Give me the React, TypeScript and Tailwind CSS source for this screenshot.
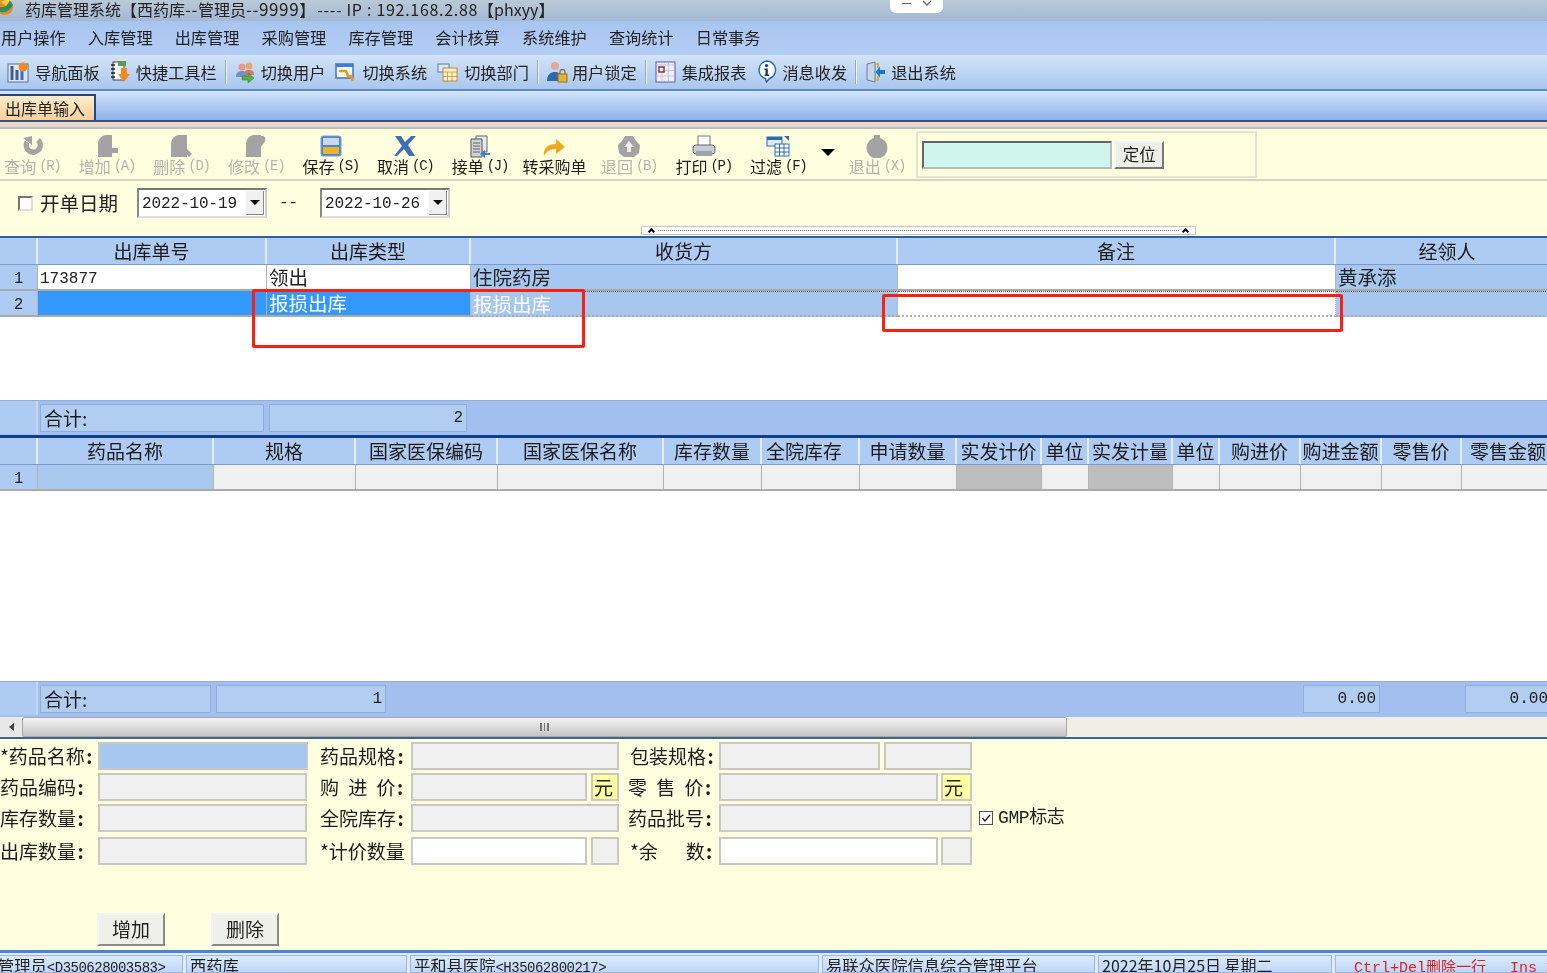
import type { ReactNode } from "react"

const cjk = "font-['Noto_Sans_CJK_SC','Liberation_Sans',sans-serif]"
const mono = "font-['Liberation_Mono','Noto_Sans_CJK_SC',monospace]"

const menus = ["用户操作", "入库管理", "出库管理", "采购管理", "库存管理", "会计核算", "系统维护", "查询统计", "日常事务"]

function NavIcon({ kind }: { kind: string }) {
  if (kind === "nav")
    return (
      <svg width="22" height="22" viewBox="0 0 22 22">
        <rect x="1" y="3" width="20" height="18" fill="#dfe7f5" stroke="#56709c" />
        <path d="M5 5v14M10 9v10" stroke="#3c5f9a" strokeWidth="3" />
        <path d="M15 19V10" stroke="#2f6fc0" strokeWidth="3" />
        <circle cx="16" cy="6" r="4.5" fill="#f08a24" />
      </svg>
    )
  if (kind === "quick")
    return (
      <svg width="21" height="23" viewBox="0 0 21 23">
        <rect x="3" y="2" width="11" height="18" fill="#f6f8fb" stroke="#39485a" />
        <path d="M1 5h4M1 9h4M1 13h4M1 17h4" stroke="#222" strokeWidth="1.600" />
        <rect x="8" y="1" width="8" height="5" fill="#5d9a55" />
        <path d="M11 8v6H8l6 8 6-8h-3V8z" fill="#ef8a1f" />
      </svg>
    )
  if (kind === "user")
    return (
      <svg width="21" height="22" viewBox="0 0 21 22">
        <circle cx="7" cy="6" r="3.5" fill="#e59a8a" />
        <path d="M1 16c0-5 3-6 6-6s5 1 5 6z" fill="#6d93cc" />
        <circle cx="14" cy="5" r="3.5" fill="#e7a46e" />
        <path d="M9 14c0-4 2-5 5-5s5 1 5 5z" fill="#d3786e" />
        <path d="M7 15h6v-3l6 5-6 5v-3H7z" fill="#56b04a" stroke="#2f7f2c" strokeWidth=".6" />
      </svg>
    )
  if (kind === "system")
    return (
      <svg width="21" height="22" viewBox="0 0 21 22">
        <rect x="1" y="3" width="17" height="14" fill="#f3f7fd" stroke="#3f74b8" strokeWidth="1.5" />
        <rect x="1" y="3" width="17" height="3" fill="#3f7fd0" />
        <path d="M4 10h7l2 5h3l2 5" fill="none" stroke="#e79a1e" strokeWidth="2.600" />
      </svg>
    )
  if (kind === "dept")
    return (
      <svg width="21" height="22" viewBox="0 0 21 22">
        <rect x="1" y="3" width="11" height="8" fill="#dbe8f8" stroke="#4c7fbc" />
        <rect x="6" y="7" width="14" height="13" fill="#fbf1c8" stroke="#c08a30" />
        <path d="M6 11h14M10.500 11v9M15 11v9M6 15.500h14" stroke="#c08a30" strokeWidth=".7" />
      </svg>
    )
  if (kind === "lock")
    return (
      <svg width="21" height="22" viewBox="0 0 21 22">
        <circle cx="8" cy="5" r="4" fill="#e3a79a" />
        <path d="M0 20c0-7 4-9 8-9s7 2 7 9z" fill="#2f68ae" />
        <rect x="11" y="13" width="9" height="8" fill="#e3b23c" stroke="#9a7414" />
        <path d="M13 13v-2a2.500 2.500 0 0 1 5 0v2" fill="none" stroke="#8a7a50" strokeWidth="1.300" />
      </svg>
    )
  if (kind === "report")
    return (
      <svg width="21" height="22" viewBox="0 0 21 22">
        <rect x="1" y="1" width="19" height="20" fill="#f2eefa" stroke="#4d5fa5" />
        <path d="M1 4h19M7 1v20M13.500 1v20M1 9.500h19M1 15h19" stroke="#b7b4da" strokeWidth=".7" />
        <rect x="4" y="6" width="5" height="5" fill="#fff" stroke="#9c1a30" strokeWidth="1.400" />
      </svg>
    )
  if (kind === "msg")
    return (
      <svg width="21" height="23" viewBox="0 0 21 23">
        <path d="M10.500 1a9 9 0 0 1 3 17.500L10.500 22l-1-3.500A9 9 0 0 1 10.500 1z" fill="#fff" stroke="#2c69b4" strokeWidth="1.500" />
        <circle cx="10.500" cy="5.500" r="1.600" fill="#12386e" />
        <path d="M8.500 8.500h3.300v6h1.200v1.500H8.500v-1.500h1v-4.500h-1z" fill="#12386e" />
      </svg>
    )
  return (
    <svg width="21" height="22" viewBox="0 0 21 22">
      <path d="M2 3l8-2v20l-8-2z" fill="#c8d4e8" stroke="#6a7c9c" />
      <path d="M10 3h3v4M13 15v4h-3" fill="none" stroke="#d7a437" strokeWidth="1.600" />
      <path d="M20 9h-5V5.500L10.500 11l4.500 5.500V13h5z" fill="#1f78d0" />
    </svg>
  )
}

function NavItem({ kind, label, iconW, gap }: { kind: string; label: string; iconW: string; gap: string }) {
  return (
    <div className="flex items-center">
      <div className={`flex justify-center ${iconW} ${gap}`}>
        <NavIcon kind={kind} />
      </div>
      <span className="whitespace-nowrap">{label}</span>
    </div>
  )
}

function NavSep() {
  return <div className="mx-[8px] h-[24px] w-[2px] border-l border-r border-l-[#8fa8cc] border-r-[#eef4fc]" />
}

function ActionIcon({ kind }: { kind: string }) {
  const g = "#a3a3a3"
  switch (kind) {
    case "query":
      return (
        <svg width="24" height="22" viewBox="0 0 24 22">
          <path d="M7 7a7 7 0 1 0 11-2" fill="none" stroke={g} strokeWidth="5.500" />
          <path d="M3 3l9-2v9z" fill={g} />
        </svg>
      )
    case "add":
      return (
        <svg width="24" height="23" viewBox="0 0 24 23">
          <path d="M3 9c0-5 4-9 8-9h6v22H3z" fill={g} />
          <path d="M16 13h7v5h-7z" fill={g} />
        </svg>
      )
    case "del":
      return (
        <svg width="24" height="23" viewBox="0 0 24 23">
          <path d="M2 9c0-5 4-9 8-9h8v22H2z" fill={g} />
          <path d="M16 12l7 7-3 3-6-6z" fill={g} />
        </svg>
      )
    case "edit":
      return (
        <svg width="24" height="23" viewBox="0 0 24 23">
          <path d="M2 9c0-5 4-9 8-9h7v22H2z" fill={g} />
          <path d="M15 1h4c3 1 3 4 1 7l-4 5z" fill={g} />
        </svg>
      )
    case "save":
      return (
        <svg width="22" height="22" viewBox="0 0 22 22">
          <rect x="1" y="1" width="20" height="20" rx="2" fill="#4d84cf" stroke="#7d9fd0" />
          <rect x="3" y="3" width="16" height="7" fill="#c7d8f0" />
          <rect x="3" y="12" width="16" height="7" fill="#e9b32c" />
        </svg>
      )
    case "cancel":
      return (
        <svg width="24" height="22" viewBox="0 0 24 22">
          <path d="M2 1h6l4 6 6-6h5l-8 9 7 11h-6l-5-7-7 7H1l8-10z" fill="#3d6fb5" />
        </svg>
      )
    case "take":
      return (
        <svg width="24" height="23" viewBox="0 0 24 23">
          <path d="M8 1h11v16H8z" fill="#e8eaec" stroke="#666" />
          <path d="M3 4h11v18H3z" fill="#d0d3d6" stroke="#555" />
          <path d="M5 8h7M5 11h7M5 14h7M5 17h7" stroke="#666" />
          <path d="M22 18h-5v-3l-5 4 5 4v-3h5z" fill="#3e82c8" />
        </svg>
      )
    case "transfer":
      return (
        <svg width="24" height="22" viewBox="0 0 24 22">
          <path d="M2 21c-1-8 4-12 12-12V4l9 8-9 7v-5c-6 0-9 2-12 7z" fill="#f2a81e" />
        </svg>
      )
    case "back":
      return (
        <svg width="24" height="23" viewBox="0 0 24 23">
          <path d="M8 1h8l3 5 4 4-1 8-5 4H7l-5-4-1-8 4-4z" fill={g} />
          <path d="M12 6l5 6h-3v5h-4v-5H7z" fill="#efefe4" />
        </svg>
      )
    case "print":
      return (
        <svg width="24" height="22" viewBox="0 0 24 22">
          <rect x="6" y="1" width="12" height="10" fill="#fff" stroke="#777" />
          <rect x="1" y="10" width="22" height="9" rx="3" fill="#c9cdd3" stroke="#667" />
          <rect x="4" y="16" width="16" height="5" fill="#9ea4ad" />
        </svg>
      )
    case "filter":
      return (
        <svg width="24" height="22" viewBox="0 0 24 22">
          <rect x="1" y="2" width="15" height="9" fill="#dfeafa" stroke="#2e6ab8" />
          <rect x="1" y="2" width="15" height="3" fill="#2e6ab8" />
          <rect x="9" y="9" width="14" height="12" fill="#fff" stroke="#2e6ab8" />
          <path d="M9 13h14M9 17h14M13.500 9v12M18 9v12" stroke="#2e6ab8" />
          <path d="M18 1h5v5z" fill="#2e6ab8" />
        </svg>
      )
    default:
      return (
        <svg width="24" height="23" viewBox="0 0 24 23">
          <circle cx="12" cy="13" r="10.500" fill={g} />
          <rect x="9" y="0" width="6" height="4" fill={g} />
        </svg>
      )
  }
}

function Action({ kind, label, hot, off }: { kind: string; label: string; hot?: string; off?: boolean }) {
  return (
    <div className={`flex w-[74.6px] flex-col items-center ${off ? "text-[#b4b4b0]" : "text-[#1c1c1c]"}`}>
      <div className="flex h-[24px] items-center">
        <ActionIcon kind={kind} />
      </div>
      <div className="-mt-[3px] flex h-[22px] items-center whitespace-nowrap text-[16px] leading-[22px]">
        {label}
        {hot && <span className={`${mono} ml-[3px] text-[14px] tracking-[-1.300px]`}>({hot})</span>}
      </div>
    </div>
  )
}

function DateBox({ value }: { value: string }) {
  return (
    <div className="flex h-[30px] w-[130px] items-center border-2 border-t-[#777] border-l-[#888] border-r-[#ccc] border-b-[#ddd] bg-white">
      <span className={`${mono} ml-[3px] w-[104px] pt-[2px] text-[16px] tracking-[-0.1px]`}>{value}</span>
      <div className="flex h-[24px] w-[18px] items-center justify-center border-r border-b border-r-[#888] border-b-[#888] bg-[#f0f0f0]">
        <div className="h-0 w-0 border-x-[5px] border-t-[5px] border-x-transparent border-t-black" />
      </div>
    </div>
  )
}

const topCols = "grid-cols-[38px_229px_204px_427px_438px_224px]"
const lowCols = "grid-cols-[38px_176px_142px_142px_166px_98px_98px_97px_85px_47px_84px_47px_81px_81px_80px_94px]"

const lowHead = ["", "药品名称", "规格", "国家医保编码", "国家医保名称", "库存数量", "全院库存", "申请数量", "实发计价", "单位", "实发计量", "单位", "购进价", "购进金额", "零售价", "零售金额"]

function HeadCell({ className, children }: { className?: string; children?: ReactNode }) {
  return (
    <div className={`flex min-w-0 items-center justify-center whitespace-nowrap border-r-2 border-r-[#e3edfb] bg-[#aecbf3] text-[19px] leading-[24px] text-[#1a1a1a] ${className ?? ""}`}>
      {children}
    </div>
  )
}

function Cell({ className, children }: { className: string; children?: ReactNode }) {
  return <div className={`flex min-h-0 items-center whitespace-nowrap border-r border-b-2 border-r-[#b4b4b4] border-b-[#aaa] pl-[2px] ${className}`}>{children}</div>
}

function IndexCell({ n }: { n: number }) {
  return <Cell className={`${mono} justify-center bg-[#aecbf3] !pl-0 pt-[4px] text-[16px] leading-[20px]`}>{n}</Cell>
}

function SumBox({ className, children }: { className: string; children?: ReactNode }) {
  return <div className={`flex h-[28px] shrink-0 items-center border border-[#8fadde] bg-[#b1cdf1] px-[3px] leading-[24px] text-[#1c1c1c] ${className}`}>{children}</div>
}

// a trailing colon in the labels is half an em wide, as in the bitmap font of the picture
function Label({ className, text, colon = true }: { className: string; text: string; colon?: boolean }) {
  return (
    <div className={`shrink-0 whitespace-pre text-[19px] leading-[24px] text-[#1c1c1c] [word-spacing:5px] ${className}`}>
      {text}
      {colon && <span className="inline-block w-[9px] text-center font-bold">:</span>}
    </div>
  )
}

function Field({ className, children }: { className: string; children?: ReactNode }) {
  return <div className={`flex h-[28px] shrink-0 items-center border-2 border-[#c9c9c4] pl-[1px] text-[19px] leading-[24px] ${className}`}>{children}</div>
}

function FormBtn({ label, className }: { label: string; className: string }) {
  return (
    <div className={`flex h-[33px] w-[68px] items-center justify-center border-2 border-t-[#f4f4f4] border-l-[#f4f4f4] border-r-[#8a8a8a] border-b-[#8a8a8a] bg-[#f0f0ea] text-[19px] ${className}`}>
      {label}
    </div>
  )
}

function StatusCell({ className, children }: { className: string; children: ReactNode }) {
  return <div className={`h-full shrink-0 overflow-hidden whitespace-nowrap border border-[#9db8de] bg-gradient-to-b from-[#dcebfd] to-[#bfd6f6] leading-[19px] text-[#222] ${className}`}>{children}</div>
}

export default function App() {
  return (
    <div className={`${cjk} relative flex h-[973px] w-[1547px] flex-col overflow-hidden bg-white text-[#222] blur-[0.45px]`}>
      {/* title bar */}
      <div className="flex h-[21px] shrink-0 items-start bg-gradient-to-b from-[#b9c9d6] to-[#a3b9d3] text-[16px] leading-[17px]">
        <svg width="18" height="18" viewBox="0 0 18 18" className="-ml-[2px] mr-[9px]">
          <circle cx="7" cy="7" r="8" fill="#e98c1f" />
          <path d="M0 7c4 1 9 0 12-6l3 4c-3 6-9 9-14 6z" fill="#2f8f5c" />
          <path d="M3 2c3-2 6-3 9-2L8 6z" fill="#f4d03f" />
        </svg>
        <span className="whitespace-nowrap">
          药库管理系统【西药库<span className="text-[17px] tracking-[0.6px]">--</span>管理员<span className="text-[17px] tracking-[0.6px]">--9999</span>】<span className="ml-[2px] text-[16px] tracking-[0.7px]">---- IP : 192.168.2.88</span>【<span className="text-[16px]">phxyy</span>】
        </span>
      </div>

      {/* menu */}
      <div className="flex h-[34px] shrink-0 items-center gap-[22.1px] bg-gradient-to-b from-[#a8c5f1] to-[#b3cdf4] pb-[2px] pl-[1px] text-[16.2px] leading-[20px]">
        {menus.map((m) => (
          <span key={m} className="whitespace-nowrap">{m}</span>
        ))}
      </div>

      {/* shortcut bar */}
      <div className="flex h-[36px] shrink-0 items-center border-b-2 border-b-[#5f8ac4] bg-gradient-to-b from-[#d3e3f8] to-[#aac7ee] pb-[1px] pl-[7px] text-[16.2px] leading-[20px]">
        <NavItem kind="nav" label="导航面板" iconW="w-[22px]" gap="mr-[6px]" />
        <div className="w-[10px]" />
        <NavItem kind="quick" label="快捷工具栏" iconW="w-[21px]" gap="mr-[5px]" />
        <NavSep />
        <NavItem kind="user" label="切换用户" iconW="w-[21px]" gap="mr-[5px]" />
        <div className="w-[10px]" />
        <NavItem kind="system" label="切换系统" iconW="w-[21px]" gap="mr-[6px]" />
        <div className="w-[10px]" />
        <NavItem kind="dept" label="切换部门" iconW="w-[21px]" gap="mr-[6px]" />
        <NavSep />
        <NavItem kind="lock" label="用户锁定" iconW="w-[21px]" gap="mr-[4px]" />
        <NavSep />
        <NavItem kind="report" label="集成报表" iconW="w-[21px]" gap="mr-[6px]" />
        <div className="w-[10px]" />
        <NavItem kind="msg" label="消息收发" iconW="w-[21px]" gap="mr-[5px]" />
        <NavSep />
        <NavItem kind="exit" label="退出系统" iconW="w-[21px]" gap="mr-[5px]" />
      </div>

      {/* tab strip */}
      <div className="flex h-[31px] shrink-0 items-end border-b-2 border-b-[#3d4f78] bg-gradient-to-b from-[#d5e4fa] to-[#8eb0e8]">
        <div className="flex h-[26px] w-[96px] items-center border-t-2 border-r-2 border-t-[#27457e] border-r-[#27457e] bg-gradient-to-b from-[#fdeccb] to-[#f7cf9a] pl-[5px] text-[16px] leading-[20px]">
          出库单输入
        </div>
      </div>
      <div className="h-[7px] shrink-0 border-b-2 border-b-[#bdbdb8] bg-gradient-to-b from-[#efd8c4] to-[#d8d8d2]" />

      {/* action toolbar */}
      <div className="flex h-[52px] shrink-0 items-start border-b-2 border-b-[#d6d6c8] bg-[#ffffe0] pt-[5px]">
        <div className="-ml-[5px] flex items-center">
          <Action kind="query" label="查询" hot="R" off />
          <Action kind="add" label="增加" hot="A" off />
          <Action kind="del" label="删除" hot="D" off />
          <Action kind="edit" label="修改" hot="E" off />
          <Action kind="save" label="保存" hot="S" />
          <Action kind="cancel" label="取消" hot="C" />
          <Action kind="take" label="接单" hot="J" />
          <Action kind="transfer" label="转采购单" />
          <Action kind="back" label="退回" hot="B" off />
          <Action kind="print" label="打印" hot="P" />
          <Action kind="filter" label="过滤" hot="F" />
          <div className="mb-[6px] ml-[5px] mr-[5px] h-0 w-0 border-x-[7px] border-t-[7px] border-x-transparent border-t-black" />
          <Action kind="exit" label="退出" hot="X" off />
        </div>
        <div className="-mt-[3px] ml-[2px] flex h-[47px] w-[341px] items-center border-2 border-[#e4e4d2] pl-[4px]">
          <div className="h-[28px] w-[190px] border-2 border-t-[#666] border-l-[#666] border-r-[#bbb] border-b-[#bbb] bg-[#cff5ec]" />
          <div className="ml-[2px] flex h-[28px] w-[50px] items-center justify-center border-2 border-t-[#f4f4f4] border-l-[#f4f4f4] border-r-[#777] border-b-[#777] bg-[#eeeee8] pb-[1px] text-[16.5px] leading-[22px]">定位</div>
        </div>
      </div>

      {/* date filter */}
      <div className="flex h-[44px] shrink-0 items-center bg-[#ffffe0]">
        <div className="ml-[18px] h-[15px] w-[15px] border-2 border-t-[#777] border-l-[#777] border-r-[#ddd] border-b-[#ddd] bg-white" />
        <span className="ml-[7px] w-[97px] text-[19.5px] leading-[24px]">开单日期</span>
        <DateBox value="2022-10-19" />
        <span className={`${mono} ml-[12px] w-[41px] text-[16px]`}>--</span>
        <DateBox value="2022-10-26" />
      </div>

      {/* splitter */}
      <div className="flex h-[13px] shrink-0 items-start border-b-2 border-b-[#2f5f9f] bg-[#ffffe0] pt-[1px]">
        <div className="ml-[641px] flex h-[9px] w-[555px] items-center justify-between border border-[#c8c8c0] bg-white px-[7px]">
          <span className="h-[5px] w-[5px] translate-y-[1px] rotate-45 border-t-2 border-l-2 border-black" />
          <span className="mx-[4px] h-0 flex-1 border-t border-dotted border-[#5f8ac4]" />
          <span className="h-[5px] w-[5px] translate-y-[1px] rotate-45 border-t-2 border-l-2 border-black" />
        </div>
      </div>

      {/* upper grid */}
      <div className={`grid h-[27px] shrink-0 border-b border-b-[#7d9bc9] ${topCols}`}>
        <HeadCell />
        <HeadCell>出库单号</HeadCell>
        <HeadCell>出库类型</HeadCell>
        <HeadCell>收货方</HeadCell>
        <HeadCell>备注</HeadCell>
        <HeadCell>经领人</HeadCell>
      </div>
      <div className={`grid h-[26px] shrink-0 grid-rows-[26px] ${topCols}`}>
        <IndexCell n={1} />
        <Cell className={`${mono} bg-white pt-[4px] text-[16px] leading-[20px]`}>173877</Cell>
        <Cell className="bg-white text-[19.5px] leading-[24px]">领出</Cell>
        <Cell className="bg-[#a6c8f0] text-[19.5px] leading-[24px]">住院药房</Cell>
        <Cell className="bg-white" />
        <Cell className="bg-[#a6c8f0] text-[19.5px] leading-[24px]">黄承添</Cell>
      </div>
      <div className={`grid h-[26px] shrink-0 grid-rows-[26px] ${topCols}`}>
        <IndexCell n={2} />
        <Cell className="bg-[#3399ff]" />
        <Cell className="bg-[#3399ff] text-[19.5px] leading-[24px] text-white">报损出库</Cell>
        <Cell className="border-y border-dotted border-[#555] bg-[#a6c8f0] text-[19.5px] leading-[22px] text-white">报损出库</Cell>
        <Cell className="border-y border-dotted border-[#555] bg-white" />
        <Cell className="border-y border-dotted border-[#555] bg-[#a6c8f0]" />
      </div>
      <div className="flex-[0_0_83px] bg-white" />

      {/* upper summary */}
      <div className="flex h-[35px] shrink-0 items-center border-t border-t-[#8fadde] bg-[#a3bff0] pb-[1px]">
        <div className="h-full w-[38px] shrink-0 border-r-2 border-r-[#c3d6f6] bg-[#aecbf3]" />
        <SumBox className="ml-[2px] w-[224px] text-[19px]">合计:</SumBox>
        <SumBox className={`${mono} ml-[5px] w-[198px] justify-end text-[16px]`}>2</SumBox>
      </div>
      <div className="h-[3px] shrink-0 bg-[#0e3f8f]" />

      {/* lower grid */}
      <div className={`grid h-[27px] shrink-0 border-b border-b-[#7d9bc9] ${lowCols}`}>
        {lowHead.map((h, i) => (
          <HeadCell key={i} className={h === "全院库存" ? "pr-[12px]" : ""}>{h}</HeadCell>
        ))}
      </div>
      <div className={`grid h-[26px] shrink-0 grid-rows-[26px] ${lowCols}`}>
        <IndexCell n={1} />
        <Cell className="bg-[#a8c8ee]" />
        {lowHead.slice(2).map((h, i) => (
          <Cell key={i} className={h === "实发计价" || h === "实发计量" ? "bg-[#bdbdbd]" : "bg-[#f0f0f0]"} />
        ))}
      </div>
      <div className="flex-[0_0_190px] bg-white" />

      {/* lower summary */}
      <div className="flex h-[36px] shrink-0 items-center border-t border-t-[#8fadde] bg-[#a3bff0] pb-[2px]">
        <div className="h-full w-[38px] shrink-0 border-r-2 border-r-[#c3d6f6] bg-[#aecbf3]" />
        <SumBox className="ml-[2px] w-[171px] text-[19px]">合计:</SumBox>
        <SumBox className={`${mono} ml-[5px] w-[170px] justify-end text-[16px]`}>1</SumBox>
        <SumBox className={`${mono} ml-[917px] w-[77px] justify-end text-[16px]`}>0.00</SumBox>
        <SumBox className={`${mono} ml-[85px] w-[84px] justify-end !pr-0 text-[16px]`}>0.00</SumBox>
      </div>

      {/* scrollbar */}
      <div className="flex h-[22px] shrink-0 items-stretch border-b-2 border-b-[#40648f] bg-[#efefe6]">
        <div className="flex w-[22px] items-center justify-center bg-[#e8e8e8]">
          <div className="h-0 w-0 border-y-[4px] border-r-[5px] border-y-transparent border-r-[#444]" />
        </div>
        <div className="flex w-[1045px] items-center justify-center rounded-[2px] border border-[#a8a8a8] bg-gradient-to-b from-[#f4f4f4] to-[#c4c4c4]">
          <div className="h-[8px] w-[9px] border-x-2 border-[#777] bg-[linear-gradient(90deg,transparent_40%,#777_40%,#777_60%,transparent_60%)]" />
        </div>
      </div>

      {/* edit form */}
      <div className="flex min-h-0 flex-1 flex-col bg-[#ffffe0] pt-[3px]">
        <div className="flex items-center">
          <Label className="w-[98px]" text="*药品名称" />
          <Field className="w-[210px] border-[#b8cee8] bg-[#a6c8f0]" />
          <Label className="ml-[12px] w-[91px]" text="药品规格" />
          <Field className="w-[208px] bg-[#f0f0f0]" />
          <Label className="ml-[11px] w-[89px]" text="包装规格" />
          <Field className="w-[161px] bg-[#f0f0f0]" />
          <Field className="ml-[4px] w-[88px] bg-[#f0f0f0]" />
        </div>
        <div className="mt-[3px] flex items-center">
          <Label className="w-[98px]" text="药品编码" />
          <Field className="w-[209px] bg-[#f0f0f0]" />
          <Label className="ml-[13px] w-[91px]" text="购 进 价" />
          <Field className="w-[176px] bg-[#f0f0f0]" />
          <Field className="ml-[4px] w-[28px] bg-[#ffffa0]">元</Field>
          <Label className="ml-[9px] w-[91px]" text="零 售 价" />
          <Field className="w-[219px] bg-[#f0f0f0]" />
          <Field className="ml-[3px] w-[31px] bg-[#ffffa0]">元</Field>
        </div>
        <div className="mt-[3px] flex items-center">
          <Label className="w-[98px]" text="库存数量" />
          <Field className="w-[209px] bg-[#f0f0f0]" />
          <Label className="ml-[13px] w-[91px]" text="全院库存" />
          <Field className="w-[208px] bg-[#f0f0f0]" />
          <Label className="ml-[9px] w-[91px]" text="药品批号" />
          <Field className="w-[253px] bg-[#f0f0f0]" />
          <div className="ml-[7px] flex h-[14px] w-[14px] items-center justify-center border border-[#555] bg-white">
            <svg width="10" height="10" viewBox="0 0 10 10"><path d="M1.500 5l2.500 3 5-6" fill="none" stroke="#222" strokeWidth="1.400" /></svg>
          </div>
          <span className={`${mono} ml-[5px] whitespace-nowrap text-[18px] leading-[22px] tracking-[-0.4px]`}>GMP标志</span>
        </div>
        <div className="mt-[5px] flex items-center">
          <Label className="w-[98px]" text="出库数量" />
          <Field className="w-[209px] bg-[#f0f0f0]" />
          <Label className="ml-[13px] w-[91px]" text="*计价数量" colon={false} />
          <Field className="w-[176px] bg-white" />
          <Field className="ml-[4px] w-[28px] bg-[#f0f0f0]" />
          <Label className="ml-[11px] w-[89px]" text="*余   数" />
          <Field className="w-[219px] bg-white" />
          <Field className="ml-[3px] w-[31px] bg-[#f0f0f0]" />
        </div>
        <div className="mt-[48px] flex">
          <FormBtn label="增加" className="ml-[97px]" />
          <FormBtn label="删除" className="ml-[46px]" />
        </div>
      </div>

      {/* status bar */}
      <div className="flex h-[23px] shrink-0 gap-[3px] border-t-[3px] border-t-[#4d82d6] bg-[#dfeafb] pt-[2px]">
        <StatusCell className="-ml-[3px] w-[186px] text-[16.3px]">管理员<span className={`${mono} text-[14px] tracking-[-0.5px]`}>&lt;D350628003583&gt;</span></StatusCell>
        <StatusCell className="w-[221px] pl-[3px] text-[16.3px]">西药库</StatusCell>
        <StatusCell className="w-[409px] pl-[3px] text-[16.3px]">平和县医院<span className={`${mono} text-[14px] tracking-[-0.5px]`}>&lt;H35062800217&gt;</span></StatusCell>
        <StatusCell className="w-[273px] pl-[3px] text-[16.3px]">易联众医院信息综合管理平台</StatusCell>
        <StatusCell className="w-[234px] pl-[3px] text-[16px]">2022年10月25日 星期二</StatusCell>
        <StatusCell className="w-[220px] pl-[18px] text-[15px] !text-[#e02020]"><span className={mono}>Ctrl+Del</span>删除一行<span className={`${mono} ml-[24px]`}>Ins 增</span></StatusCell>
      </div>

      {/* window buttons floating over the title bar */}
      <div className="absolute left-[890px] top-0 flex h-[13px] w-[53px] items-start justify-around rounded-b-[6px] bg-white px-[6px]">
        <div className="mt-[3px] h-[1px] w-[9px] bg-[#666]" />
        <svg width="10" height="7" viewBox="0 0 10 7"><path d="M1 1l4 4 4-4" fill="none" stroke="#666" strokeWidth="1.300" /></svg>
      </div>

      {/* red annotations */}
      <div className="absolute left-[252px] top-[289px] h-[59px] w-[333px] rounded-[2px] border-[3px] border-[#ff1f10]" />
      <div className="absolute left-[882px] top-[294px] h-[38px] w-[461px] rounded-[2px] border-[3px] border-[#ff1f10]" />
    </div>
  )
}
